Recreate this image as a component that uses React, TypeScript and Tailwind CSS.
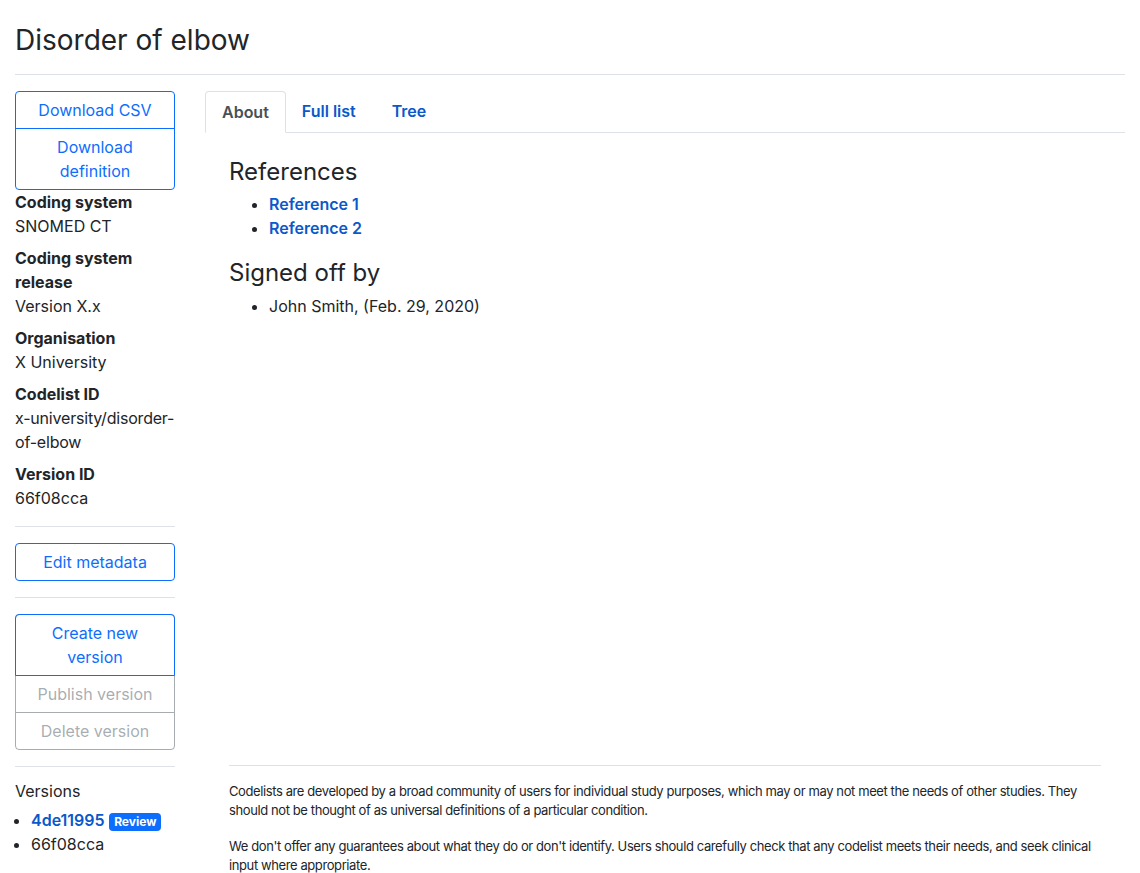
import React from 'react';

const App = () => {
  const meta: { label: string; value: React.ReactNode }[] = [
    { label: 'Coding system', value: 'SNOMED CT' },
    { label: 'Coding system release', value: 'Version X.x' },
    { label: 'Organisation', value: 'X University' },
    {
      label: 'Codelist ID',
      value: (
        <span className="whitespace-nowrap tracking-[-0.2px]">
          x-university/disorder-
          <br />
          of-elbow
        </span>
      ),
    },
    { label: 'Version ID', value: '66f08cca' },
  ];

  return (
    <div className="min-h-screen bg-white text-[#212529] text-base leading-6" style={{ fontFamily: 'Inter, "Noto Sans", sans-serif' }}>
      <div className="w-[1140px] px-[15px]">
        <h1 className="text-[28px] leading-[1.2] font-normal pt-[24px] pb-[16px]">Disorder of elbow</h1>
        <hr className="border-t border-[#dee2e6] mb-4" />

        <div className="flex gap-[30px]">
          {/* Sidebar */}
          <div className="w-[160px] shrink-0">
            <div className="flex flex-col border border-[#0d6efd] rounded">
              <button className="text-[#0d6efd] py-[6px] px-3 text-center leading-6 border-b border-[#0d6efd]">Download CSV</button>
              <button className="text-[#0d6efd] py-[6px] px-3 text-center leading-6">Download definition</button>
            </div>

            <dl>
              {meta.map((m, i) => (
                <div key={i} className="mb-2">
                  <dt className="font-bold break-words">{m.label}</dt>
                  <dd className="break-words">{m.value}</dd>
                </div>
              ))}
            </dl>

            <hr className="border-t border-[#dee2e6] mt-4 mb-4" />
            <button className="w-full border border-[#0d6efd] rounded text-[#0d6efd] py-[6px] leading-6">Edit metadata</button>
            <hr className="border-t border-[#dee2e6] my-4" />

            <div className="flex flex-col border border-[#6c757d]/60 rounded">
              <button className="text-[#0d6efd] py-[6px] px-3 leading-6 border border-[#0d6efd] -m-px mb-0 rounded-t">Create new version</button>
              <button className="text-[#6c757d]/60 py-[6px] px-3 leading-6 border-b border-[#6c757d]/60">Publish version</button>
              <button className="text-[#6c757d]/60 py-[6px] px-3 leading-6">Delete version</button>
            </div>
            <hr className="border-t border-[#dee2e6] mt-4 mb-3" />

            <p className="mb-[5px]">Versions</p>
            <ul className="list-disc pl-4">
              <li>
                <a className="text-[#0a58ca] font-semibold">4de11995</a>{' '}
                <span className="inline-block bg-[#0d6efd] text-white text-[12px] font-bold leading-none px-[5px] py-[3px] rounded">Review</span>
              </li>
              <li>66f08cca</li>
            </ul>
          </div>

          {/* Main */}
          <div className="flex-1 flex flex-col min-h-[785px]">
            <div className="flex border-b border-[#dee2e6]">
              <div className="px-4 py-2 -mb-px border border-[#dee2e6] border-b-white rounded-t bg-white text-[#495057] font-semibold">About</div>
              <div className="px-4 py-2 text-[#0a58ca] font-semibold">Full list</div>
              <div className="pl-[20px] pr-4 py-2 text-[#0a58ca] font-semibold">Tree</div>
            </div>

            <div className="px-6 flex-1 flex flex-col">
              <h3 className="text-[24px] leading-[1.2] mt-[25px] mb-[6px]">References</h3>
              <ul className="list-disc pl-10">
                <li><a className="text-[#0a58ca] font-semibold">Reference 1</a></li>
                <li><a className="text-[#0a58ca] font-semibold">Reference 2</a></li>
              </ul>
              <h3 className="text-[24px] leading-[1.2] mt-[19px] mb-[6px]">Signed off by</h3>
              <ul className="list-disc pl-10">
                <li>John Smith, (Feb. 29, 2020)</li>
              </ul>

              <div className="mt-auto">
                <hr className="border-t border-[#dee2e6]" />
                <div className="text-[13px] leading-[19.5px] pt-4 tracking-[-0.4px]">
                  <p className="mb-4">
                    Codelists are developed by a broad community of users for individual study purposes, which may or may not meet the needs of other studies. They should not be thought of as universal definitions of a particular condition.
                  </p>
                  <p>
                    We don't offer any guarantees about what they do or don't identify. Users should carefully check that any codelist meets their needs, and seek clinical input where appropriate.
                  </p>
                </div>
              </div>
            </div>
          </div>
        </div>
      </div>
    </div>
  );
};

export default App;
